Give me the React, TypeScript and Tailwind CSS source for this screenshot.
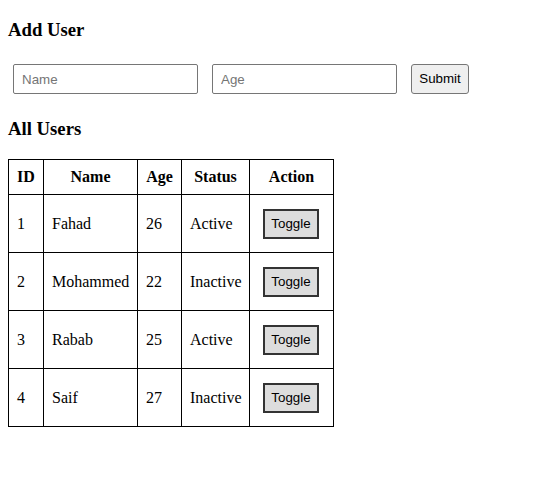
import React, { useState } from 'react';

type User = { id: number; name: string; age: number; active: boolean };

const initialUsers: User[] = [
    { id: 1, name: 'Fahad', age: 26, active: true },
    { id: 2, name: 'Mohammed', age: 22, active: false },
    { id: 3, name: 'Rabab', age: 25, active: true },
    { id: 4, name: 'Saif', age: 27, active: false },
];

const App = () => {
    const [users, setUsers] = useState<User[]>(initialUsers);

    const toggle = (id: number) => {
        setUsers(users.map((u) => (u.id === id ? { ...u, active: !u.active } : u)));
    };

    return (
        <div className="px-2 pb-2 font-['Liberation_Serif',serif] text-base text-black bg-white min-h-[504px]">
            <h3 className="mt-[18.72px] mb-[18.72px] text-[18.72px] font-bold leading-[normal]">Add User</h3>

            <form className="flex items-start gap-[14px] pl-[5px] pt-[5px] pb-[4.5px]" onSubmit={(e) => e.preventDefault()}>
                <input
                    type="text"
                    placeholder="Name"
                    className="w-[185px] h-[30px] px-2 border border-[#767676] rounded-[2px] font-['Liberation_Sans',Arial,sans-serif] text-[13.333px] placeholder:text-[#757575] outline-none"
                />
                <input
                    type="text"
                    placeholder="Age"
                    className="w-[185px] h-[30px] px-2 border border-[#767676] rounded-[2px] font-['Liberation_Sans',Arial,sans-serif] text-[13.333px] placeholder:text-[#757575] outline-none"
                />
                <button
                    type="submit"
                    className="w-[58px] h-[30px] border border-[#767676] rounded-[3px] bg-[#efefef] font-['Liberation_Sans',Arial,sans-serif] text-[13.333px] text-black"
                >
                    Submit
                </button>
            </form>

            <h3 className="mt-[18.72px] mb-[19.5px] text-[18.72px] font-bold leading-[normal]">All Users</h3>

            <table className="table-fixed w-[325px] border-collapse border border-black">
                <colgroup>
                    <col className="w-[35px]" />
                    <col className="w-[94px]" />
                    <col className="w-[44px]" />
                    <col className="w-[68px]" />
                    <col className="w-[84px]" />
                </colgroup>
                <thead>
                    <tr className="h-[35px]">
                        <th className="border border-black px-2 font-bold text-center">ID</th>
                        <th className="border border-black px-2 font-bold text-center">Name</th>
                        <th className="border border-black px-2 font-bold text-center">Age</th>
                        <th className="border border-black px-2 font-bold text-center">Status</th>
                        <th className="border border-black px-2 font-bold text-center">Action</th>
                    </tr>
                </thead>
                <tbody>
                    {users.map((u) => (
                        <tr key={u.id} className="h-[58px]">
                            <td className="border border-black px-2 align-middle">{u.id}</td>
                            <td className="border border-black px-2 align-middle whitespace-nowrap">{u.name}</td>
                            <td className="border border-black px-2 align-middle">{u.age}</td>
                            <td className="border border-black px-2 align-middle whitespace-nowrap">{u.active ? 'Active' : 'Inactive'}</td>
                            <td className="border border-black px-2 align-middle">
                                <button
                                    onClick={() => toggle(u.id)}
                                    className="block mx-[5px] w-[56px] h-[30px] border-2 border-[#333] bg-[#dddddd] font-['Liberation_Sans',Arial,sans-serif] text-[13.333px] text-black"
                                >
                                    Toggle
                                </button>
                            </td>
                        </tr>
                    ))}
                </tbody>
            </table>
        </div>
    );
};

export default App;
